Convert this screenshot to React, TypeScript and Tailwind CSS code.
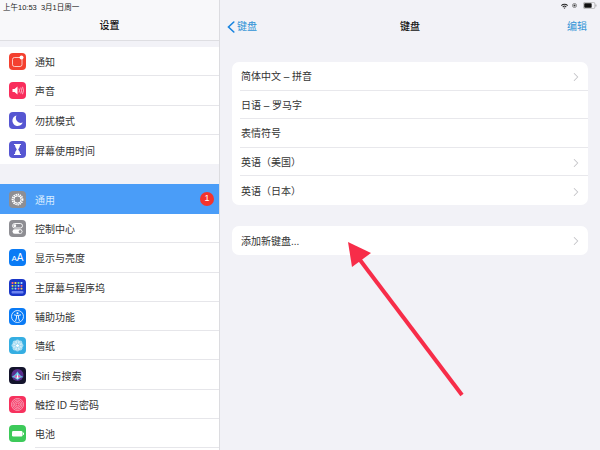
import type { ReactNode } from "react";
import { ChevronRight } from "lucide-react";

const font = "font-['Liberation_Sans','Noto_Sans_CJK_SC',sans-serif]";

function Tile({ bg, children }: { bg: string; children: ReactNode }) {
  return (
    <span className={`w-[17px] h-[17px] rounded-[4px] shrink-0 flex items-center justify-center ${bg}`}>
      <svg viewBox="0 0 17 17" className="w-[17px] h-[17px]">
        {children}
      </svg>
    </span>
  );
}

const icons = {
  notify: (
    <Tile bg="bg-[#f4402f]">
      <rect x="3.500" y="4.500" width="9.500" height="9" rx="2" fill="none" stroke="#fff" strokeOpacity="0.7" />
      <circle cx="12.500" cy="4.500" r="2" fill="#fff" />
    </Tile>
  ),
  sound: (
    <Tile bg="bg-[#f92d5c]">
      <path d="M3.500 7h2l3-2.500v8l-3-2.500h-2z" fill="#fff" />
      <path d="M10 6.500q1 2 0 4M11.800 5.500q1.500 3 0 6M13.500 4.800q2 3.700 0 7.400" fill="none" stroke="#fff" strokeOpacity="0.8" strokeWidth="0.800" />
    </Tile>
  ),
  moon: (
    <Tile bg="bg-[#5656d2]">
      <path d="M7.500 3.500a5.300 5.300 0 1 0 6.200 7a5 5 0 0 1-6.200-7z" fill="#fff" />
    </Tile>
  ),
  hourglass: (
    <Tile bg="bg-[#5656d2]">
      <path d="M5 3.500h7M5 13.500h7" stroke="#fff" strokeWidth="1.200" />
      <path d="M6 4h5q0 2.500-1.800 4.500q1.800 2 1.800 4.500h-5q0-2.500 1.800-4.500q-1.800-2-1.800-4.500z" fill="#fff" />
    </Tile>
  ),
  gear: (
    <Tile bg="bg-[#8e8e93]">
      <circle cx="8.500" cy="8.500" r="5" fill="none" stroke="#fff" strokeWidth="1.800" strokeDasharray="1.400 0.700" />
      <circle cx="8.500" cy="8.500" r="3.600" fill="none" stroke="#fff" strokeWidth="1" />
      <circle cx="8.500" cy="8.500" r="1.500" fill="#8e8e93" />
    </Tile>
  ),
  toggles: (
    <Tile bg="bg-[#8e8e93]">
      <rect x="3.500" y="3.500" width="10" height="4.500" rx="2.250" fill="none" stroke="#fff" strokeWidth="0.900" />
      <circle cx="5.800" cy="5.750" r="1.400" fill="#fff" />
      <rect x="3.500" y="9.300" width="10" height="4.500" rx="2.250" fill="#fff" />
      <circle cx="11.200" cy="11.550" r="1.500" fill="#8e8e93" />
    </Tile>
  ),
  display: (
    <Tile bg="bg-[#0a7bf5]">
      <text x="2.500" y="12" fontSize="8" fill="#fff" fontFamily="Liberation Sans">A</text>
      <text x="7.800" y="12" fontSize="10" fill="#fff" fontFamily="Liberation Sans">A</text>
    </Tile>
  ),
  home: (
    <Tile bg="bg-[#1a37c8]">
      {[3.5, 6.5, 9.5, 12.5].map((x, i) =>
        [4, 6.8, 9.6].map((y, j) => (
          <rect
            key={`${i}-${j}`}
            x={x - 0.9}
            y={y - 0.9}
            width="1.800"
            height="1.800"
            rx="0.400"
            fill={["#ff6b6b", "#ffd23f", "#6fe08a", "#9fd8ff"][(i + j) % 4]}
          />
        )),
      )}
      <rect x="2.500" y="12" width="12" height="2.500" rx="1" fill="#6d84f0" />
    </Tile>
  ),
  access: (
    <Tile bg="bg-[#0a7bf5]">
      <circle cx="8.500" cy="8.500" r="6" fill="none" stroke="#fff" strokeWidth="0.800" />
      <circle cx="8.500" cy="5.300" r="1" fill="#fff" />
      <path d="M5 6.800l2.500.6v2.500l-1 3M12 6.800l-2.500.6v2.500l1 3M7.500 7.400h2" fill="none" stroke="#fff" strokeWidth="0.900" />
    </Tile>
  ),
  wallpaper: (
    <Tile bg="bg-[#35aee2]">
      {[0, 45, 90, 135, 180, 225, 270, 315].map((a) => (
        <circle
          key={a}
          cx={8.5 + 3.8 * Math.cos((a * Math.PI) / 180)}
          cy={8.5 + 3.8 * Math.sin((a * Math.PI) / 180)}
          r="2.200"
          fill="#fff"
          fillOpacity="0.55"
        />
      ))}
      <circle cx="8.500" cy="8.500" r="1.600" fill="#fff" />
    </Tile>
  ),
  siri: (
    <Tile bg="bg-[#14142c]">
      <circle cx="8.500" cy="8" r="6" fill="#5b2f8e" />
      <path d="M2.500 10q3-1 6-5.500q2.500 4.500 6 5.500q-3 0-6 3q-3-3-6-3z" fill="#5ac8e8" />
      <path d="M5 10.500q2-3.500 3.500-1.500q1.500-2 3.500 1.500q-2-.8-3.500.8q-1.500-1.600-3.500-.8z" fill="#e84fa8" />
      <path d="M7.500 11.500q1-3.500 1-6q.5 3 1 6z" fill="#fff" />
    </Tile>
  ),
  touch: (
    <Tile bg="bg-[#f7325e]">
      {[1.5, 3, 4.5, 6].map((r) => (
        <circle key={r} cx="8.500" cy="8.500" r={r} fill="none" stroke="#f6b3c6" strokeWidth="0.800" />
      ))}
    </Tile>
  ),
  battery: (
    <Tile bg="bg-[#3dca5a]">
      <rect x="3" y="6" width="10.500" height="5.500" rx="1.200" fill="#fff" />
      <rect x="14" y="7.500" width="1" height="2.500" rx="0.400" fill="#fff" />
    </Tile>
  ),
};

function SideRow({ icon, label, last }: { icon: ReactNode; label: string; last?: boolean }) {
  return (
    <div className="h-[29.300px] pl-[9px] flex items-center gap-[9px]">
      {icon}
      <div className={`flex-1 h-full pt-[3px] flex items-center text-[10px] text-[#333] ${last ? "" : "border-b border-[#e6e6ea]"}`}>
        {label}
      </div>
    </div>
  );
}

function KeyRow({ label, arrow, last, tall }: { label: string; arrow?: boolean; last?: boolean; tall?: boolean }) {
  return (
    <div className={`ml-[8px] pl-[1px] pr-[5px] pt-[2px] flex items-center justify-between text-[10px] text-[#333] ${tall ? "h-[29px]" : "h-[28.600px]"} ${last ? "" : "border-b border-[#e8e8ec]"}`}>
      <span>{label}</span>
      {arrow && <ChevronRight className="w-[14px] h-[14px] text-[#c4c4c8]" strokeWidth={1.800} />}
    </div>
  );
}

export default function App() {
  return (
    <div className={`relative w-[600px] h-[450px] overflow-hidden flex bg-[#f2f2f7] ${font}`}>
      <aside className="w-[220px] h-full shrink-0 border-r border-[#dcdce0] flex flex-col">
        <header className="h-[41px] bg-[#f8f8fa] border-b border-[#dedee2] relative flex items-end justify-center pb-[7px]">
          <span className="absolute left-[3px] top-[2px] text-[7.500px] leading-[11px] text-[#222] whitespace-nowrap">
            上午10:53&nbsp;&nbsp;3月1日周一
          </span>
          <span className="text-[10px] leading-[14px] font-medium text-[#111]">设置</span>
        </header>
        <div className="mt-[6px] bg-white h-[117px]">
          <SideRow icon={icons.notify} label="通知" />
          <SideRow icon={icons.sound} label="声音" />
          <SideRow icon={icons.moon} label="勿扰模式" />
          <SideRow icon={icons.hourglass} label="屏幕使用时间" last />
        </div>
        <div className="mt-[20px] bg-white flex-1 overflow-hidden">
          <div className="h-[30px] bg-[#4a9df8] pl-[9px] pr-[5px] flex items-center gap-[9px]">
            {icons.gear}
            <span className="flex-1 pt-[2px] text-[10px] text-[#d8ecff]">通用</span>
            <span className="w-[14px] h-[14px] rounded-full bg-[#f5332c] text-white text-[9px] flex items-center justify-center">
              1
            </span>
          </div>
          <SideRow icon={icons.toggles} label="控制中心" />
          <SideRow icon={icons.display} label="显示与亮度" />
          <SideRow icon={icons.home} label="主屏幕与程序坞" />
          <SideRow icon={icons.access} label="辅助功能" />
          <SideRow icon={icons.wallpaper} label="墙纸" />
          <SideRow icon={icons.siri} label={"Siri\u2009与搜索"} />
          <SideRow icon={icons.touch} label={"触控\u2009ID\u2009与密码"} />
          <SideRow icon={icons.battery} label="电池" />
        </div>
      </aside>

      <main className="flex-1 flex flex-col">
        <header className="h-[41px] relative flex items-end justify-between pb-[7px] pl-[7px] pr-[13px]">
          <div className="absolute right-[3px] top-[2px] flex items-center">
            <svg viewBox="0 0 10 8" className="w-[7px] h-[6px]">
              <path d="M0 3a7 7 0 0 1 10 0l-1 1.100a5.500 5.500 0 0 0-8 0zM2 5a4 4 0 0 1 6 0l-1 1a2.600 2.600 0 0 0-4 0zM3.800 6.800a1.700 1.700 0 0 1 2.400 0L5 8z" fill="#222" />
            </svg>
            <svg viewBox="0 0 8 8" className="w-[5px] h-[5px] ml-[4px]">
              <circle cx="4" cy="4" r="3.300" fill="none" stroke="#333" strokeWidth="0.800" />
              <circle cx="4" cy="4" r="1.700" fill="#333" />
            </svg>
            <svg viewBox="0 0 16 8" className="w-[14px] h-[7px] ml-[6px]">
              <rect x="0.400" y="0.400" width="13.200" height="7.200" rx="1.800" fill="none" stroke="#999" strokeWidth="0.700" />
              <rect x="1.400" y="1.400" width="8.500" height="5.200" rx="0.800" fill="#111" />
              <rect x="14.300" y="2.800" width="1" height="2.400" rx="0.400" fill="#999" />
            </svg>
          </div>
          <div className="flex items-center gap-[2px] text-[10px] leading-[14px] text-[#2f93d6]">
            <svg viewBox="0 0 8 12" className="w-[8px] h-[12px]">
              <path d="M6.800 1L1.500 6l5.300 5" fill="none" stroke="#1a84e0" strokeWidth="1.600" strokeLinecap="round" />
            </svg>
            键盘
          </div>
          <span className="absolute left-0 right-0 text-center text-[10px] leading-[14px] font-medium text-[#111]">键盘</span>
          <span className="text-[10px] leading-[14px] text-[#2f93d6]">编辑</span>
        </header>
        <div className="mt-[21px] mx-[12px] bg-white rounded-[7px] overflow-hidden">
          <KeyRow label="简体中文 – 拼音" arrow />
          <KeyRow label="日语 – 罗马字" />
          <KeyRow label="表情符号" />
          <KeyRow label="英语（美国）" arrow />
          <KeyRow label="英语（日本）" arrow last />
        </div>
        <div className="mt-[21px] mx-[12px] bg-white rounded-[7px] overflow-hidden">
          <KeyRow label="添加新键盘..." arrow last tall />
        </div>
      </main>

      {/* red annotation arrow drawn over the screenshot */}
      <svg viewBox="0 0 600 450" className="absolute inset-0 w-[600px] h-[450px] pointer-events-none">
        <path d="M348 242L371 253L352 267z" fill="#f72d49" />
        <path d="M360 260L462 395" stroke="#f72d49" strokeWidth="4" fill="none" />
      </svg>
    </div>
  );
}
